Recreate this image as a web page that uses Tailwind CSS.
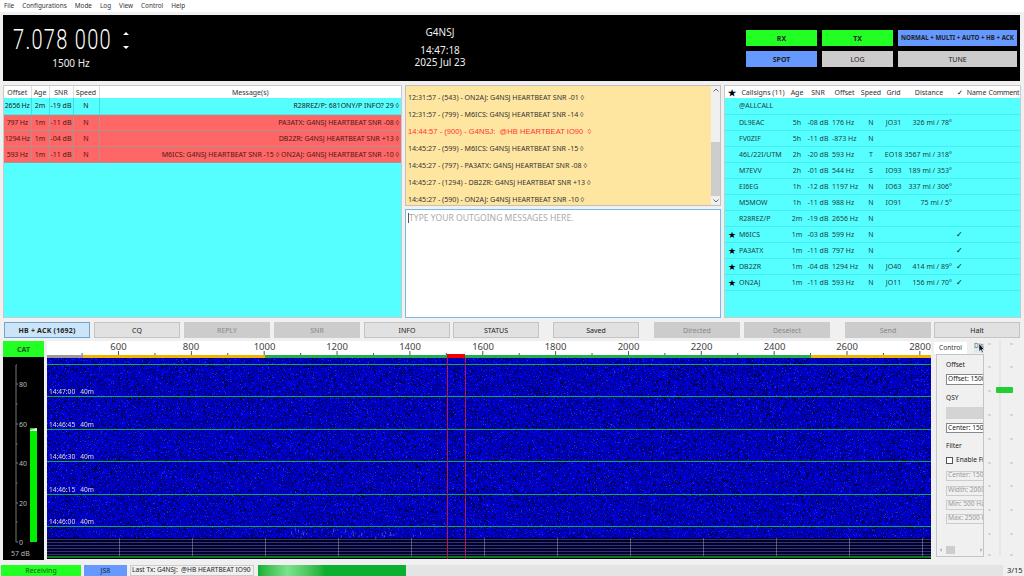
<!DOCTYPE html>
<html lang="en">
<head>
    <meta charset="UTF-8">
    <title>JS8Call</title>
    <script src="https://cdn.jsdelivr.net/npm/@tailwindcss/browser@4"></script>
</head>
<body class="bg-[#f0f0f0] text-[#222] font-['Noto_Sans',sans-serif] text-[7px] leading-none overflow-hidden">
<div class="relative w-[1024px] h-[576px] flex flex-col overflow-hidden">

    <!-- Menu -->
    <nav class="h-[12px] mb-[3px] bg-white flex items-center gap-[8px] pl-[4px] text-[6.4px] text-[#333]">
        <span>File</span><span>Configurations</span><span>Mode</span><span>Log</span><span>View</span><span>Control</span><span>Help</span>
    </nav>

    <!-- Header -->
    <header class="h-[66px] ml-[3px] w-[1017px] bg-black flex text-white shrink-0">
        <div class="w-[394px] pl-[10px] pt-[12px]">
            <div class="flex items-start h-[26px]">
                <span class="font-['Roboto',sans-serif] font-light text-[20px] leading-[26px] w-[103px] tracking-[1.3px] scale-y-[1.35] whitespace-pre">7.078 000</span>
                <svg class="mt-[5px] ml-[7px]" width="6" height="18" viewBox="0 0 6 18"><path d="M3 0L6 3H0Z M0 14H6L3 17Z" fill="#fff"/></svg>
            </div>
            <div class="w-[116px] text-center text-[10px] mt-[5px] text-[#eee]">1500 Hz</div>
        </div>
        <div class="w-[86px] text-center text-[10px] pt-[12px] text-[#eee]">
            <div>G4NSJ</div>
            <div class="mt-[8px]">14:47:18</div>
            <div class="mt-[2px]">2025 Jul 23</div>
        </div>
        <div class="flex-1 pl-[263px] pt-[15px] grid grid-cols-[71px_71px_119px] grid-rows-[16px_16px] gap-x-[5px] gap-y-[5px] text-[7px] text-[#222]">
            <div class="bg-[#22ff22] flex items-center justify-center font-bold">RX</div>
            <div class="bg-[#22ff22] flex items-center justify-center font-bold">TX</div>
            <div class="bg-[#6699ff] flex items-center justify-center font-bold text-[6.2px] whitespace-nowrap">NORMAL + MULTI + AUTO + HB + ACK</div>
            <div class="bg-[#6699ff] flex items-center justify-center font-bold">SPOT</div>
            <div class="bg-[#cccccc] flex items-center justify-center">LOG</div>
            <div class="bg-[#cccccc] flex items-center justify-center">TUNE</div>
        </div>
    </header>

    <!-- Panels -->
    <section class="h-[233px] mt-[4px] ml-[3px] flex gap-[3px] shrink-0">
        <!-- Activity table -->
        <div class="w-[399px] bg-[#55ffff] border border-[#c8c8c8]">
            <table class="w-full table-fixed border-collapse">
                <colgroup><col class="w-[27px]"><col class="w-[18px]"><col class="w-[24px]"><col class="w-[26px]"><col></colgroup>
                <thead class="bg-white text-[#333]">
                    <tr class="h-[12px]">
                        <th class="font-normal border-r border-[#ddd]">Offset</th><th class="font-normal border-r border-[#ddd]">Age</th><th class="font-normal border-r border-[#ddd]">SNR</th><th class="font-normal border-r border-[#ddd]">Speed</th><th class="font-normal">Message(s)</th>
                    </tr>
                </thead>
                <tbody class="text-center [&_td:first-child]:tracking-[-0.2px]">
                    <tr class="h-[16px] border-b border-[#44eeee]">
                        <td class="border-r border-[#44dddd]">2656 Hz</td><td class="border-r border-[#44dddd]">2m</td><td class="border-r border-[#44dddd]">-19 dB</td><td class="border-r border-[#44dddd]">N</td><td class="text-right pr-[2px]">R28REZ/P: 681ONY/P INFO? 29 ◊</td>
                    </tr>
                    <tr class="h-[16px] bg-[#ff6666] text-[#4a1a1a] border-b border-[#b09090]">
                        <td class="border-r border-[#b09090]">797 Hz</td><td class="border-r border-[#b09090]">1m</td><td class="border-r border-[#b09090]">-11 dB</td><td class="border-r border-[#b09090]">N</td><td class="text-right pr-[2px]">PA3ATX: G4NSJ HEARTBEAT SNR -08 ◊</td>
                    </tr>
                    <tr class="h-[16px] bg-[#ff6666] text-[#4a1a1a] border-b border-[#b09090]">
                        <td class="border-r border-[#b09090]">1294 Hz</td><td class="border-r border-[#b09090]">1m</td><td class="border-r border-[#b09090]">-04 dB</td><td class="border-r border-[#b09090]">N</td><td class="text-right pr-[2px]">DB2ZR: G4NSJ HEARTBEAT SNR +13 ◊</td>
                    </tr>
                    <tr class="h-[16px] bg-[#ff6666] text-[#4a1a1a] border-b border-[#b09090]">
                        <td class="border-r border-[#b09090]">593 Hz</td><td class="border-r border-[#b09090]">1m</td><td class="border-r border-[#b09090]">-11 dB</td><td class="border-r border-[#b09090]">N</td><td class="text-right pr-[2px]">M6ICS: G4NSJ HEARTBEAT SNR -15 ◊ ON2AJ: G4NSJ HEARTBEAT SNR -10 ◊</td>
                    </tr>
                </tbody>
            </table>
        </div>

        <!-- Messages -->
        <div class="w-[316px] flex flex-col gap-[3px]">
            <div class="h-[121px] flex border border-[#c0c0c0] bg-[#ffe6a0]">
                <div class="flex-1 pl-[2px] pt-[8px] flex flex-col gap-[10px] text-[7.1px] leading-[7px] text-[#333] whitespace-nowrap">
                    <div>12:31:57 - (543) - ON2AJ: G4NSJ HEARTBEAT SNR -01 ◊</div>
                    <div>12:31:57 - (799) - M6ICS: G4NSJ HEARTBEAT SNR -14 ◊</div>
                    <div class="text-[#ff3333] text-[7.6px] font-['Liberation_Sans',sans-serif]">14:44:57 - (900) - G4NSJ:&nbsp; @HB HEARTBEAT IO90 &nbsp;◊</div>
                    <div>14:45:27 - (599) - M6ICS: G4NSJ HEARTBEAT SNR -15 ◊</div>
                    <div>14:45:27 - (797) - PA3ATX: G4NSJ HEARTBEAT SNR -08 ◊</div>
                    <div>14:45:27 - (1294) - DB2ZR: G4NSJ HEARTBEAT SNR +13 ◊</div>
                    <div>14:45:27 - (590) - ON2AJ: G4NSJ HEARTBEAT SNR -10 ◊</div>
                </div>
                <div class="w-[9px] bg-[#f0f0f0] flex flex-col justify-between items-center py-[2px]">
                    <svg width="6" height="4" viewBox="0 0 6 4"><path d="M0.5 3.5L3 1L5.5 3.5" fill="none" stroke="#666"/></svg>
                    <div class="w-full h-[54px] bg-[#cdcdcd] mt-[49px] mb-[3px]"></div>
                    <svg width="6" height="4" viewBox="0 0 6 4"><path d="M0.5 0.5L3 3L5.5 0.5" fill="none" stroke="#666"/></svg>
                </div>
            </div>
            <div class="flex-1 bg-white border border-[#7ab8e8] pl-[2px] pt-[3px] flex items-start text-[8.6px] leading-[10px] text-[#aaa] whitespace-nowrap">
                <span class="w-px h-[10px] bg-[#555]"></span><span>TYPE YOUR OUTGOING MESSAGES HERE.</span>
            </div>
        </div>

        <!-- Callsigns -->
        <div class="w-[297px] bg-[#55ffff] border border-[#c8c8c8]">
            <table class="w-full table-fixed border-collapse">
                <colgroup><col class="w-[13px]"><col class="w-[50px]"><col class="w-[18px]"><col class="w-[24px]"><col class="w-[29px]"><col class="w-[24px]"><col class="w-[21px]"><col class="w-[50px]"><col class="w-[11px]"><col class="w-[23px]"><col></colgroup>
                <thead class="bg-white text-[#333]">
                    <tr class="h-[12px]">
                        <th class="text-black text-[9px]">★</th><th class="font-normal">Callsigns (11)</th><th class="font-normal">Age</th><th class="font-normal">SNR</th><th class="font-normal">Offset</th><th class="font-normal">Speed</th><th class="font-normal">Grid</th><th class="font-normal">Distance</th><th class="font-normal text-black">✓</th><th class="font-normal">Name</th><th class="font-normal tracking-[-0.25px] whitespace-nowrap">Comment</th>
                    </tr>
                </thead>
                <tbody class="text-center text-[#1f3f3f] [&_tr]:h-[16px] [&_tr]:border-b [&_tr]:border-[#44eeee]">
                    <tr><td></td><td class="text-left pl-px">@ALLCALL</td><td></td><td></td><td></td><td></td><td></td><td></td><td></td><td></td><td></td></tr>
                    <tr><td></td><td class="text-left pl-px">DL9EAC</td><td>5h</td><td>-08 dB</td><td class="text-left pl-[2px]">176 Hz</td><td>N</td><td>JO31</td><td class="text-right pr-[2px]">326 mi / 78°</td><td></td><td></td><td></td></tr>
                    <tr><td></td><td class="text-left pl-px">FV0ZIF</td><td>5h</td><td>-11 dB</td><td class="text-left pl-[2px]">-873 Hz</td><td>N</td><td></td><td></td><td></td><td></td><td></td></tr>
                    <tr><td></td><td class="text-left pl-px">46L/22I/UTM</td><td>2h</td><td>-20 dB</td><td class="text-left pl-[2px]">593 Hz</td><td>T</td><td>EO18</td><td class="text-right pr-[2px]">3567 mi / 318°</td><td></td><td></td><td></td></tr>
                    <tr><td></td><td class="text-left pl-px">M7EVV</td><td>2h</td><td>-01 dB</td><td class="text-left pl-[2px]">544 Hz</td><td>S</td><td>IO93</td><td class="text-right pr-[2px]">189 mi / 353°</td><td></td><td></td><td></td></tr>
                    <tr><td></td><td class="text-left pl-px">EI6EG</td><td>1h</td><td>-12 dB</td><td class="text-left pl-[2px]">1197 Hz</td><td>N</td><td>IO63</td><td class="text-right pr-[2px]">337 mi / 306°</td><td></td><td></td><td></td></tr>
                    <tr><td></td><td class="text-left pl-px">M5MOW</td><td>1h</td><td>-11 dB</td><td class="text-left pl-[2px]">988 Hz</td><td>N</td><td>IO91</td><td class="text-right pr-[2px]">75 mi / 5°</td><td></td><td></td><td></td></tr>
                    <tr><td></td><td class="text-left pl-px">R28REZ/P</td><td>2m</td><td>-19 dB</td><td class="text-left pl-[2px]">2656 Hz</td><td>N</td><td></td><td></td><td></td><td></td><td></td></tr>
                    <tr><td class="text-black text-[9px]">★</td><td class="text-left pl-px">M6ICS</td><td>1m</td><td>-03 dB</td><td class="text-left pl-[2px]">599 Hz</td><td>N</td><td></td><td></td><td class="text-black text-[8px]">✓</td><td></td><td></td></tr>
                    <tr><td class="text-black text-[9px]">★</td><td class="text-left pl-px">PA3ATX</td><td>1m</td><td>-11 dB</td><td class="text-left pl-[2px]">797 Hz</td><td>N</td><td></td><td></td><td class="text-black text-[8px]">✓</td><td></td><td></td></tr>
                    <tr><td class="text-black text-[9px]">★</td><td class="text-left pl-px">DB2ZR</td><td>1m</td><td>-04 dB</td><td class="text-left pl-[2px]">1294 Hz</td><td>N</td><td>JO40</td><td class="text-right pr-[2px]">414 mi / 89°</td><td class="text-black text-[8px]">✓</td><td></td><td></td></tr>
                    <tr><td class="text-black text-[9px]">★</td><td class="text-left pl-px">ON2AJ</td><td>1m</td><td>-11 dB</td><td class="text-left pl-[2px]">593 Hz</td><td>N</td><td>JO11</td><td class="text-right pr-[2px]">156 mi / 70°</td><td class="text-black text-[8px]">✓</td><td></td><td></td></tr>
                </tbody>
            </table>
        </div>
    </section>

    <!-- Button row -->
    <div class="h-[16px] mt-[4px] pl-[4px] flex text-[7px] shrink-0 [&>div]:w-[86px] [&>div]:flex [&>div]:items-center [&>div]:justify-center">
        <div class="bg-[#cce4f7] border border-[#6aa5d8] font-bold tracking-[0.2px]">HB + ACK (1692)</div>
        <div class="ml-[4px] bg-[#e1e1e1] border border-[#c4c4c4]">CQ</div>
        <div class="ml-[4px] bg-[#cccccc] text-[#888]">REPLY</div>
        <div class="ml-[4px] bg-[#cccccc] text-[#888]">SNR</div>
        <div class="ml-[4px] bg-[#e1e1e1] border border-[#c4c4c4]">INFO</div>
        <div class="ml-[3px] bg-[#e1e1e1] border border-[#c4c4c4]">STATUS</div>
        <div class="ml-[14px] bg-[#e1e1e1] border border-[#c4c4c4]">Saved</div>
        <div class="ml-[15px] bg-[#cccccc] text-[#888]">Directed</div>
        <div class="ml-[4px] bg-[#cccccc] text-[#888]">Deselect</div>
        <div class="ml-[15px] bg-[#cccccc] text-[#888]">Send</div>
        <div class="ml-[3px] bg-[#e1e1e1] border border-[#c4c4c4]">Halt</div>
    </div>

    <!-- Waterfall area -->
    <section class="h-[220px] mt-[3px] flex shrink-0">
        <!-- Signal meter -->
        <div class="w-[41px] ml-[3px] mr-[3px] flex flex-col">
            <div class="h-[16px] bg-[#22ff22] flex items-center justify-center text-[#1a5a1a] font-bold">CAT</div>
            <div class="h-[203px] bg-black">
                <svg width="41" height="203" viewBox="0 0 41 203">
                    <path d="M14 8H13V185H15M13 27H15M13 47H14.5M13 67H15M13 87H14.5M13 106H15M13 126H14.5M13 146H15M13 165H14.5" fill="none" stroke="#777"/>
                    <g fill="#bbb" font-family="Noto Sans" font-size="7" text-anchor="start">
                        <text x="16" y="30">80</text><text x="16" y="70">60</text><text x="16" y="109">40</text><text x="16" y="149">20</text><text x="16" y="188">0</text>
                    </g>
                    <rect x="27" y="71" width="7" height="114" fill="#00f000"/>
                    <path d="M27 73L34 71V74H27Z" fill="#eee"/>
                    <text x="8" y="199" fill="#bbb" font-family="Noto Sans" font-size="7">57 dB</text>
                </svg>
            </div>
        </div>

        <!-- Spectrum -->
        <div class="w-[884px] flex flex-col h-[218px]">
            <svg class="shrink-0" width="884" height="17" viewBox="47 341 884 17">
                <rect x="47" y="341" width="884" height="17" fill="#fff"/>
                <rect x="47" y="355" width="36" height="3" fill="#999"/>
                <rect x="83" y="355" width="182" height="3" fill="#f0b400"/>
                <rect x="265" y="355" width="546" height="3" fill="#1fae4a"/>
                <rect x="811" y="355" width="120" height="3" fill="#f0b400"/>
                <rect x="447" y="354" width="18" height="4" fill="#f00000"/>
                <g id="ticks" stroke="#555"></g>
                <g fill="#444" font-family="Noto Sans" font-size="9.5" text-anchor="middle">
                    <text x="118.5" y="350">600</text><text x="191" y="350">800</text><text x="264.5" y="350">1000</text><text x="337" y="350">1200</text><text x="410" y="350">1400</text><text x="483" y="350">1600</text><text x="555.5" y="350">1800</text><text x="628.5" y="350">2000</text><text x="701.5" y="350">2200</text><text x="774.5" y="350">2400</text><text x="847" y="350">2600</text><text x="920" y="350">2800</text>
                </g>
            </svg>
            <div class="relative h-[201px]">
                <canvas id="waterfall" width="884" height="201" class="block"></canvas>
                <div class="absolute inset-x-0 top-[6px] h-px bg-[#10a848]"></div>
                <div class="absolute inset-x-0 top-[38px] h-px bg-[#10a848]"></div>
                <div class="absolute inset-x-0 top-[71px] h-px bg-[#10a848]"></div>
                <div class="absolute inset-x-0 top-[103px] h-px bg-[#10a848]"></div>
                <div class="absolute inset-x-0 top-[136px] h-px bg-[#10a848]"></div>
                <div class="absolute inset-x-0 top-[168px] h-px bg-[#10a848]"></div>
                <div class="absolute inset-y-0 left-[400px] w-px bg-[#b81848]"></div>
                <div class="absolute inset-y-0 left-[418px] w-px bg-[#b81848]"></div>
                <div class="absolute left-[2px] top-[31px] text-[6.6px] text-[#ddd] whitespace-pre">14:47:00   40m</div>
                <div class="absolute left-[2px] top-[64px] text-[6.6px] text-[#ddd] whitespace-pre">14:46:45   40m</div>
                <div class="absolute left-[2px] top-[96px] text-[6.6px] text-[#ddd] whitespace-pre">14:46:30   40m</div>
                <div class="absolute left-[2px] top-[129px] text-[6.6px] text-[#ddd] whitespace-pre">14:46:15   40m</div>
                <div class="absolute left-[2px] top-[161px] text-[6.6px] text-[#ddd] whitespace-pre">14:46:00   40m</div>
            </div>
        </div>

        <!-- Control tabs -->
        <div class="w-[50px] ml-[3px] mt-[1px] flex flex-col shrink-0">
            <div class="h-[12px] flex items-center text-[6.6px] text-[#333]">
                <span class="bg-white h-full w-[33px] flex items-center justify-center">Control</span>
                <span class="ml-[7px] w-[10px] text-[#666] bg-[#dceaf5] h-[10px] overflow-hidden whitespace-nowrap">Disp</span>
            </div>
            <div class="w-[48px] h-[203px] ml-[2px] border border-[#c4c4c4] bg-[#f0f0f0] overflow-hidden flex flex-col text-[6.6px] pl-[9px] pt-[7px] whitespace-nowrap">
                <div>Offset</div>
                <div class="mt-[5px] w-[60px] h-[11px] shrink-0 bg-white border border-[#888] flex items-center pl-[1px]">Offset: 1500 Hz</div>
                <div class="mt-[10px]">QSY</div>
                <div class="mt-[6px] w-[60px] h-[12px] shrink-0 bg-[#d4d4d4]"></div>
                <div class="mt-[4px] w-[60px] h-[10px] shrink-0 bg-white border border-[#888] flex items-center pl-[1px]">Center: 1500 Hz</div>
                <div class="mt-[10px]">Filter</div>
                <div class="mt-[7px] flex items-center gap-[3px]"><span class="w-[7px] h-[7px] shrink-0 bg-white border border-[#555]"></span>Enable Filter</div>
                <div class="mt-[7px] w-[60px] h-[10px] shrink-0 border border-[#ccc] flex items-center pl-[1px] text-[#999]">Center: 1500 Hz</div>
                <div class="mt-[5px] w-[60px] h-[10px] shrink-0 border border-[#ccc] flex items-center pl-[1px] text-[#999]">Width: 2000 Hz</div>
                <div class="mt-[4px] w-[60px] h-[10px] shrink-0 border border-[#ccc] flex items-center pl-[1px] text-[#999]">Min:  500 Hz</div>
                <div class="mt-[4px] w-[60px] h-[10px] shrink-0 border border-[#ccc] flex items-center pl-[1px] text-[#999]">Max:  2500 Hz</div>
                <div class="mt-auto mb-[2px] -ml-[7px] w-[44px] h-[8px] flex items-center text-[#555] px-[1px] shrink-0">
                    <span class="w-[6px]">‹</span><span class="w-[9px] h-full bg-[#cdcdcd]"></span><span class="ml-auto">›</span>
                </div>
            </div>
        </div>

        <!-- Vertical slider -->
        <div class="w-[40px] relative">
            <svg width="40" height="218" viewBox="0 0 40 218">
                <path d="M16 0V215" stroke="#dcdcdc"/>
                <g stroke="#bbb">
                    <path d="M4 3H7M26 3H29M4 26H7M26 26H29M4 50H7M26 50H29M4 74H7M26 74H29M4 98H7M26 98H29M4 122H7M26 122H29M4 145H7M26 145H29M4 169H7M26 169H29M4 193H7M26 193H29M4 214H7M26 214H29"/>
                </g>
            </svg>
            <div class="absolute left-[12px] top-[46px] w-[17px] h-[6px] rounded-[1px] bg-[#22cc33]"></div>
        </div>
    </section>

    <!-- Status bar -->
    <footer class="h-[11px] mt-[4px] pl-[1px] flex items-stretch text-[7px] shrink-0">
        <div class="w-[80px] bg-[#22ff22] flex items-center justify-center text-[#1a5a1a]">Receiving</div>
        <div class="w-[43px] ml-[3px] bg-[#6699ff] flex items-center justify-center text-[#223]">JS8</div>
        <div class="w-[124px] ml-[3px] border border-[#ccc] flex items-center pl-[1px] text-[6.6px] whitespace-nowrap">Last Tx: G4NSJ: &nbsp;@HB HEARTBEAT IO90</div>
        <div class="w-[745px] ml-[4px] bg-[#e4e4e4]">
            <div class="w-[148px] h-full bg-gradient-to-r from-[#0cb030] via-[#7be28f] via-[20%] to-[#0cb030] to-[45%]"></div>
        </div>
        <div class="ml-[4px] flex items-center text-[7.5px]">3/15</div>
    </footer>

    <!-- Mouse pointer over the Display tab -->
    <svg class="absolute left-[978px] top-[343px]" width="7" height="11" viewBox="0 0 7 11"><path d="M1 0.5V8.5L2.8 6.8L4 9.7L5.2 9.2L4 6.4H6.3Z" fill="#111" stroke="#fff" stroke-width="0.5"/></svg>
</div>

<script>
    // ruler ticks every 100 Hz
    const ticks = document.getElementById('ticks');
    let tickMarks = '';
    for (let hz = 400; hz <= 2800; hz += 100) {
        const x = 118.5 + (hz - 600) * 0.36425;
        if (x < 47) continue;
        const len = hz % 200 === 0 ? 4 : 2;
        tickMarks += `<line x1="${x}" x2="${x}" y1="${355 - len}" y2="355"/>`;
    }
    ticks.innerHTML = tickMarks;

    // waterfall noise
    const canvas = document.getElementById('waterfall');
    const ctx = canvas.getContext('2d');
    const w = canvas.width, h = canvas.height;
    let seed = 12345;
    const rnd = () => (seed = (seed * 16807) % 2147483647) / 2147483647;
    const img = ctx.createImageData(w, h);
    const DARK_TOP = 180;
    for (let y = 0; y < h; y++) {
        for (let x = 0; x < w; x++) {
            const i = (y * w + x) * 4;
            const r = rnd();
            let blue = r < 0.22 ? 40 + r * 350 : 150 + r * 90;
            let green = r > 0.94 ? (r - 0.94) * 900 : 0;
            if (y >= DARK_TOP) {
                blue = 30 + r * 25;
                green = 0;
            }
            img.data[i] = green * 0.4;
            img.data[i + 1] = green;
            img.data[i + 2] = blue;
            img.data[i + 3] = 255;
        }
    }
    ctx.putImageData(img, 0, 0);
    // soften, the source is a scaled down capture
    ctx.filter = 'blur(0.45px)';
    ctx.drawImage(canvas, 0, 0);
    ctx.filter = 'none';
    // history rows in the dark strip
    ctx.fillStyle = 'rgba(130,130,220,0.4)';
    for (let y = DARK_TOP + 1; y < 198; y += 3) ctx.fillRect(0, y, w, 1);
    ctx.fillStyle = '#0c7a20';
    ctx.fillRect(0, 198, w, 2);
    ctx.fillStyle = '#000010';
    ctx.fillRect(0, 200, w, 1);
    // vertical bars in the dark strip
    ctx.fillStyle = 'rgba(200,200,200,0.4)';
    for (let x = 72; x < w; x += 73) ctx.fillRect(x, DARK_TOP, 1, 18);
    // weak signals just above the dark strip
    ctx.fillStyle = 'rgba(170,190,255,0.35)';
    for (let n = 0; n < 30; n++) ctx.fillRect(240 + rnd() * 150, 170 + rnd() * 9, 1, 1 + rnd() * 3);
</script>
</body>
</html>
